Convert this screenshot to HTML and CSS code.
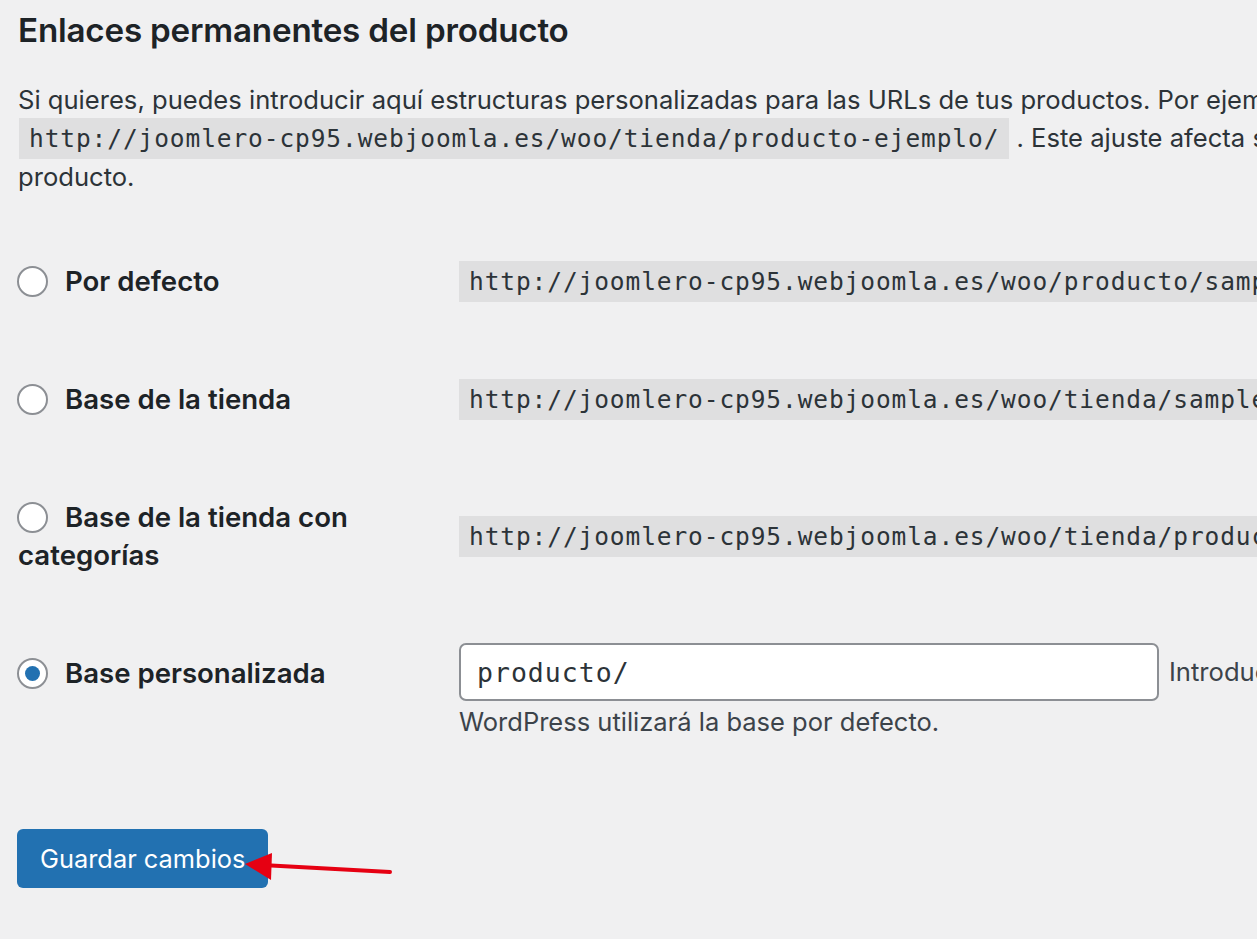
FILE: index.html
```html
<!DOCTYPE html>
<html lang="es">
<head>
    <meta charset="UTF-8">
    <meta name="viewport" content="width=device-width, initial-scale=1.0">
    <title>Enlaces permanentes del producto</title>
    <link rel="stylesheet" href="styles.css">
</head>
<body>
    <div class="wrap">
        <h2 class="title">Enlaces permanentes del producto</h2>
        <p class="intro">Si quieres, puedes introducir aquí estructuras personalizadas para las URLs de tus productos. Por ejemplo,<br>
            <code>http://joomlero-cp95.webjoomla.es/woo/tienda/producto-ejemplo/</code> . Este ajuste afecta solo<br>
            producto.</p>

        <div class="form-table">
            <div class="row">
                <div class="th"><label><input type="radio" name="product_base"> Por defecto</label></div>
                <div class="td"><code>http://joomlero-cp95.webjoomla.es/woo/producto/sample</code></div>
            </div>
            <div class="row">
                <div class="th"><label><input type="radio" name="product_base"> Base de la tienda</label></div>
                <div class="td"><code>http://joomlero-cp95.webjoomla.es/woo/tienda/sample</code></div>
            </div>
            <div class="row">
                <div class="th"><label><input type="radio" name="product_base"> Base de la tienda con categorías</label></div>
                <div class="td"><code>http://joomlero-cp95.webjoomla.es/woo/tienda/producto</code></div>
            </div>
            <div class="row row-top">
                <div class="th"><label><input type="radio" name="product_base" checked> Base personalizada</label></div>
                <div class="td td-custom">
                    <div class="field">
                        <input type="text" class="code-input" value="producto/">
                        <span class="hint">Introduce</span>
                    </div>
                    <p class="description">WordPress utilizará la base por defecto.</p>
                </div>
            </div>
        </div>

        <p class="submit">
            <button class="button-primary">Guardar cambios</button>
        </p>
    </div>

    <!-- red annotation arrow pointing at the save button -->
    <svg class="arrow" width="160" height="40" viewBox="0 0 160 40">
        <line x1="150" y1="25" x2="22" y2="18" stroke="#e60012" stroke-width="4" stroke-linecap="round"/>
        <polygon points="5,17 32,6 31,33" fill="#e60012"/>
    </svg>
</body>
</html>
```

FILE: styles.css
```css
html, body {
    margin: 0;
    padding: 0;
    background: #f0f0f1;
    overflow: hidden;
}
body {
    font-family: Inter, Roboto, "Noto Sans", sans-serif;
    color: #1d2327;
    font-size: 25.6px;
    line-height: 38px;
    width: 1257px;
    height: 939px;
    position: relative;
}
.wrap {
    padding: 0 0 0 18px;
}
.title {
    font-size: 33.2px;
    font-weight: 600;
    line-height: 38px;
    margin: 11px 0 0;
    letter-spacing: -0.2px;
}
.intro {
    margin: 32px 0 0;
    white-space: nowrap;
    color: #2c3338;
}
.intro code {
    margin-left: 1px;
}
code {
    font-family: "DejaVu Sans Mono", "Liberation Mono", monospace;
    font-size: 24.5px;
    background: #dfdfe0;
    color: #2c3338;
    padding: 6px 10px 6px 10px;
    letter-spacing: 0.9px;
    white-space: nowrap;
}
.form-table {
    margin-top: 31px;
}
.row {
    display: flex;
    align-items: center;
    margin-bottom: 10px;
}
.row-top {
    align-items: flex-start;
}
.th {
    width: 423px;
    flex: none;
    padding: 35px 18px 35px 0;
    font-weight: 600;
    font-size: 27.6px;
}
.th label {
    cursor: pointer;
}
input[type="radio"] {
    appearance: none;
    -webkit-appearance: none;
    width: 31px;
    height: 31px;
    margin: -4px 10px 0 -1px;
    border: 2px solid #8c8f94;
    border-radius: 50%;
    background: #fff;
    vertical-align: middle;
    box-sizing: border-box;
    position: relative;
}
input[type="radio"]:checked::before {
    content: "";
    position: absolute;
    left: 6px;
    top: 6px;
    width: 15px;
    height: 15px;
    border-radius: 50%;
    background: #2271b1;
}
.td {
    flex: none;
    white-space: nowrap;
}
.td-custom {
    padding-top: 24px;
}
.field {
    display: flex;
    align-items: center;
    gap: 10px;
}
.code-input {
    font-family: "DejaVu Sans Mono", "Liberation Mono", monospace;
    font-size: 26.5px;
    letter-spacing: 1px;
    color: #2c3338;
    width: 700px;
    height: 58px;
    box-sizing: border-box;
    padding: 0 16px;
    border: 2px solid #8c8f94;
    border-radius: 7px;
    background: #fff;
    outline: none;
}
.hint {
    font-size: 25.6px;
    color: #3c434a;
}
.description {
    margin: 2px 0 0;
    font-size: 25.5px;
    color: #3c434a;
}
.submit {
    margin: 88px 0 0;
}
.button-primary {
    font-family: Inter, Roboto, "Noto Sans", sans-serif;
    font-size: 25.4px;
    color: #fff;
    background: #2271b1;
    border: none;
    border-radius: 6px;
    height: 59px;
    padding: 0 23px;
    margin-left: -1px;
    cursor: pointer;
}
.arrow {
    position: absolute;
    left: 240px;
    top: 847px;
}
```
